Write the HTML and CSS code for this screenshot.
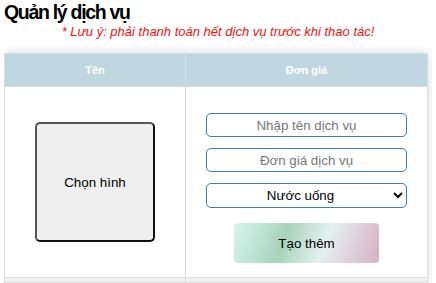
FILE: index.html
```html
<!DOCTYPE html>
<html lang="vi">
<head>
    <meta charset="UTF-8">
    <meta name="viewport" content="width=device-width, initial-scale=1.0">
    <title>Quản lý dịch vụ</title>
    <link rel="stylesheet" href="styles.css">
</head>
<body>
    <h2 class="title">Quản lý dịch vụ</h2>
    <p class="note">* Lưu ý: phải thanh toán hết dịch vụ trước khi thao tác!</p>

    <table class="service-table">
        <thead>
            <tr>
                <th class="col-name">Tên</th>
                <th class="col-price">Đơn giá</th>
            </tr>
        </thead>
        <tbody>
            <tr>
                <td class="cell-image">
                    <button class="pick-image">Chọn hình</button>
                </td>
                <td class="cell-form">
                    <input type="text" class="field" placeholder="Nhập tên dịch vụ">
                    <input type="text" class="field" placeholder="Đơn giá dịch vụ">
                    <select class="field field-select">
                        <option>Nước uống</option>
                        <option>Đồ ăn</option>
                    </select>
                    <button class="btn-add">Tạo thêm</button>
                </td>
            </tr>
            <tr class="row-alt">
                <td></td>
                <td></td>
            </tr>
        </tbody>
    </table>
</body>
</html>
```

FILE: styles.css
```css
body {
    font-family: "Liberation Sans", Arial, sans-serif;
    margin: 0 4px;
    background: #fff;
    color: #000;
}
.title {
    font-size: 19.5px;
    font-weight: bold;
    letter-spacing: -1.3px;
    margin: 0;
    line-height: 24px;
}
.note {
    color: #f20f0f;
    font-style: italic;
    font-size: 13px;
    text-align: center;
    margin: 0 0 13px 0;
    line-height: 16px;
}
.service-table {
    width: 424px;
    border-collapse: collapse;
    box-shadow: 0 0 10px rgba(0,0,0,0.15);
    background: #fff;
}
.service-table th {
    background: #bfd8df;
    color: #fff;
    font-size: 11px;
    font-weight: bold;
    height: 32px;
    padding: 0;
    border: 1px solid #dcdcdc;
}
.service-table td {
    border: 1px solid #dcdcdc;
    padding: 0;
    text-align: center;
    vertical-align: middle;
}
.col-name {
    width: 180px;
}
.pick-image {
    width: 120px;
    height: 120px;
    background: #efefef;
    border: 2px solid #111;
    border-top-color: #555;
    border-left-color: #555;
    border-radius: 5px;
    font-family: "Liberation Sans", Arial, sans-serif;
    font-size: 13.33px;
    color: #000;
    padding: 0;
}
.cell-form {
    padding: 26px 0 14px 0 !important;
}
.cell-form .field {
    display: block;
    width: 201px;
    height: 24px;
    margin: 0 auto 11px auto;
    box-sizing: border-box;
    border: 1px solid #3d7bb5;
    border-radius: 5px;
    text-align: center;
    font-family: "Liberation Sans", Arial, sans-serif;
    font-size: 13.33px;
    background: #fff;
}
.cell-form .field::placeholder {
    color: #777;
}
.field-select {
    height: 25px !important;
    text-align-last: center;
    color: #000;
    margin-bottom: 15px !important;
}
.btn-add {
    width: 145px;
    height: 40px;
    border: none;
    border-radius: 4px;
    background: linear-gradient(110deg, #d6f7f0 0%, #a9d2bb 35%, #e4f1f1 62%, #d7b0c4 100%);
    font-family: "Liberation Sans", Arial, sans-serif;
    font-size: 13.33px;
    color: #000;
}
.row-alt td {
    background: #f2f2f2;
    height: 4px;
}
```
